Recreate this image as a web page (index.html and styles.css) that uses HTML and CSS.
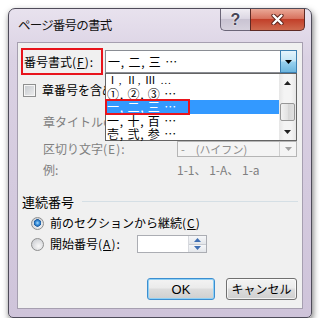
FILE: index.html
```html
<!DOCTYPE html>
<html lang="ja">
<head>
<meta charset="utf-8">
<title>ページ番号の書式</title>
<link rel="stylesheet" href="styles.css">
</head>
<body>
<div class="window">
  <div class="titlebar">
    <span class="title">ページ番号の書式</span>
    <div class="caption-btns">
      <div class="cbtn help">?</div>
      <div class="cbtn close">
        <svg width="13" height="11" viewBox="0 0 13 11"><path d="M2.5 1.5 L10.5 9.5 M10.5 1.5 L2.5 9.5" stroke="#5a2018" stroke-width="4.2" stroke-linecap="round"/><path d="M2.5 1.5 L10.5 9.5 M10.5 1.5 L2.5 9.5" stroke="#fff" stroke-width="2.4" stroke-linecap="round"/></svg>
      </div>
    </div>
  </div>
  <div class="client">
    <div class="row r1">
      <div class="label-box">番号書式<span class="mn">(<u>F</u>):</span></div>
      <div class="combo-wrap">
        <div class="combo">
          <span class="combo-text seq">一, 二, 三 …</span>
          <span class="drop-btn"><svg width="7" height="4" viewBox="0 0 7 4"><polygon points="0,0 7,0 3.5,4" fill="#000"/></svg></span>
        </div>
        <div class="listbox">
          <div class="list-items">
            <div class="item seq roman">Ⅰ, Ⅱ, Ⅲ …</div>
            <div class="item seq">①, ②, ③ …</div>
            <div class="item seq sel">一, 二, 三 …<span class="redmark"></span></div>
            <div class="item seq">一, 十, 百 …</div>
            <div class="item seq">壱, 弐, 参 …</div>
          </div>
          <div class="sb">
            <div class="sb-btn"><svg width="7" height="4" viewBox="0 0 7 4"><polygon points="0,4 7,4 3.5,0" fill="#222"/></svg></div>
            <div class="sb-track"><div class="sb-thumb"></div></div>
            <div class="sb-btn"><svg width="7" height="4" viewBox="0 0 7 4"><polygon points="0,0 7,0 3.5,4" fill="#222"/></svg></div>
          </div>
        </div>
      </div>
    </div>

    <div class="row r2">
      <span class="checkbox"></span>
      <span class="cb-label">章番号を含める<span class="mn">(<u>N</u>)</span></span>
    </div>

    <div class="row r3">
      <span class="col-label dis">章タイトルのスタイル(P):</span>
      <div class="dcombo"><span class="dtext">見出し 1</span><span class="darrow"></span></div>
    </div>
    <div class="row r4">
      <span class="col-label dis">区切り文字<span class="mn">(E):</span></span>
      <div class="dcombo"><span class="dtext">-　(ハイフン)</span><span class="darrow"><svg width="7" height="4" viewBox="0 0 7 4"><polygon points="0,0 7,0 3.5,4" fill="#a0a0a0"/></svg></span></div>
    </div>
    <div class="row r5">
      <span class="col-label dis">例:</span>
      <span class="dis example">1-1、 1-A、 1-a</span>
    </div>

    <div class="row group">
      <span class="group-text">連続番号</span>
      <span class="group-line"></span>
    </div>

    <div class="row r7">
      <span class="radio checked"></span>
      <span class="radio-label">前のセクションから継続<span class="mn">(<u>C</u>)</span></span>
    </div>
    <div class="row r8">
      <span class="radio"></span>
      <span class="radio-label fixed">開始番号<span class="mn">(<u>A</u>):</span></span>
      <div class="spin">
        <div class="spin-edit"></div>
        <div class="spin-btns">
          <span class="sp"><svg width="7" height="4" viewBox="0 0 7 4"><polygon points="0,4 7,4 3.5,0" fill="#3f6fb3"/></svg></span>
          <span class="sp"><svg width="7" height="4" viewBox="0 0 7 4"><polygon points="0,0 7,0 3.5,4" fill="#3f6fb3"/></svg></span>
        </div>
      </div>
    </div>

    <div class="row buttons">
      <div class="btn default">OK</div>
      <div class="btn">キャンセル</div>
    </div>
  </div>
</div>
</body>
</html>
```

FILE: styles.css
```css
* { box-sizing: border-box; }
html, body { margin: 0; padding: 0; background: #fff; }
body {
  font-family: "Noto Sans CJK JP", "Noto Sans", sans-serif;
  font-size: 12px;
  color: #000;
  line-height: 1;
}

.window {
  margin: 8px 0 0 8px;
  width: 304px;
  height: 310px;
  border: 1px solid #4f4c5a;
  border-radius: 7px 7px 5px 5px;
  background: linear-gradient(#e8e2ee, #dad1e3 50px, #cfc4da);
  box-shadow: 1px 3px 6px rgba(0,0,0,.55);
  padding: 0 8px 8px 8px;
  display: flex;
  flex-direction: column;
}

.titlebar {
  height: 33px;
  display: flex;
  align-items: flex-start;
}
.title {
  margin-top: 8px;
  margin-left: 1px;
  font-size: 12.5px;
  line-height: 16px;
  letter-spacing: -0.8px;
  color: #111;
}
.caption-btns {
  margin-left: auto;
  margin-right: -2px;
  display: flex;
}
.cbtn {
  height: 22px;
  border: 1px solid #6b6678;
  border-top: none;
  display: flex;
  align-items: center;
  justify-content: center;
}
.help {
  width: 30px;
  border-radius: 0 0 0 5px;
  border-right: none;
  background: linear-gradient(#f0edf3, #dcd7e3 45%, #c9c3d2 50%, #d6d1dd);
  font-family: "Liberation Sans", sans-serif;
  font-weight: bold;
  font-size: 16px;
  color: #474556;
  text-shadow: 0 0 2px #fff, 0 0 1px #fff;
}
.close {
  width: 55px;
  border-radius: 0 0 5px 0;
  border-color: #5e2a24;
  background: linear-gradient(#eaa897, #d8735f 45%, #c2402a 50%, #cf6a4f);
}

.client {
  flex: 1;
  background: #f0f0f0;
  border: 1px solid #a69fb0;
  display: flex;
  flex-direction: column;
}

.row {
  display: flex;
  align-items: center;
  height: 20px;
  flex: none;
}

.mn { letter-spacing: 1px; }

/* row 1 */
.r1 { margin-top: 5px; height: 27px; }
.label-box {
  margin-left: 3px;
  width: 82px;
  height: 27px;
  border: 2px solid #e8141c;
  padding-left: 1px;
  display: flex;
  align-items: center;
  white-space: nowrap;
}
.combo-wrap {
  margin-left: 2px;
  width: 192px;
  height: 23px;
  position: relative;
}
.combo {
  height: 23px;
  border: 1px solid #8a8d94;
  border-right: none;
  background: #fff;
  display: flex;
  align-items: center;
}
.combo-text { flex: 1; padding-left: 2px; white-space: nowrap; }
.seq { letter-spacing: 0.8px; }
.drop-btn {
  width: 17px;
  height: 23px;
  margin-top: -1px;
  margin-bottom: -1px;
  border: 1px solid #3c7fb1;
  background: linear-gradient(#e5f4fc, #c4e5f6 48%, #98d1ef 52%, #6db6de);
  display: flex;
  align-items: center;
  justify-content: center;
}

.listbox {
  position: absolute;
  left: 0;
  top: 23px;
  width: 192px;
  height: 68px;
  border: 1px solid #646464;
  background: #fff;
  display: flex;
  z-index: 5;
}
.list-items { flex: 1; }
.item {
  height: 13px;
  line-height: 13px;
  padding-left: 1px;
  white-space: nowrap;
}
.item.roman { font-family: "Liberation Serif", "Noto Sans CJK JP", serif; font-size: 11px; }
.item.sel {
  height: 14px;
  line-height: 14px;
  background: #3399ff;
  color: #fff;
  position: relative;
}
.redmark {
  position: absolute;
  left: -1px;
  top: -1px;
  width: 85px;
  height: 16px;
  border: 2px solid #e8141c;
}
.sb {
  width: 17px;
  display: flex;
  flex-direction: column;
  background: linear-gradient(90deg, #e6e6e6, #f4f4f4 30%, #f4f4f4 70%, #e6e6e6);
}
.sb-btn {
  height: 17px;
  display: flex;
  align-items: center;
  justify-content: center;
}
.sb-track { flex: 1; padding: 12px 1px 0 1px; }
.sb-thumb {
  height: 18px;
  border: 1px solid #979797;
  border-radius: 2px;
  background: linear-gradient(90deg, #f2f2f2, #e2e2e2 50%, #d6d6d6 51%, #e0e0e0);
}

/* row 2 */
.r2 { margin-top: 5px; }
.checkbox {
  margin-left: 5px;
  width: 13px;
  height: 13px;
  border: 1px solid #8e8f8f;
  background: linear-gradient(135deg, #c4c8cd, #eeeeee);
  box-shadow: inset 0 0 0 1px #f6f6f6;
}
.cb-label { margin-left: 6px; white-space: nowrap; }

/* rows 3-5 */
.r3 { margin-top: 12px; }
.r4 { margin-top: 8px; height: 18px; }
.r5 { margin-top: 2px; }
.col-label {
  margin-left: 25px;
  width: 134px;
  flex: none;
  white-space: nowrap;
}
.dis { color: #7f7f7f; }
.dcombo {
  width: 120px;
  height: 16px;
  border: 1px solid #b5b5b5;
  background: #f4f4f4;
  display: flex;
  align-items: center;
  flex: none;
}
.dtext { flex: 1; padding-left: 3px; color: #8d8d8d; font-size: 11px; white-space: nowrap; }
.darrow {
  width: 17px;
  height: 14px;
  border-left: 1px solid #cfcfcf;
  display: flex;
  align-items: center;
  justify-content: center;
}
.example { white-space: nowrap; }

/* group */
.group { margin-top: 11px; }
.group-text { margin-left: 4px; font-size: 13px; }
.group-line {
  flex: 1;
  margin-left: 8px;
  margin-right: 4px;
  height: 1px;
  background: #d5dfe5;
}

/* radios */
.r7 { margin-top: 2px; }
.r8 { margin-top: 1px; }
.radio {
  margin-left: 13px;
  width: 13px;
  height: 13px;
  border-radius: 50%;
  border: 1px solid #8e8f8f;
  background: radial-gradient(circle at 60% 65%, #f8f8f8, #d2d4d8 70%);
  flex: none;
}
.radio.checked {
  background:
    radial-gradient(circle at 50% 45%, #a8dcfb 0, #3a8fdc 2px, #1b5b9e 3.5px, transparent 4px),
    radial-gradient(circle at 60% 65%, #f8f8f8, #d2d4d8 70%);
}
.radio-label { margin-left: 6px; white-space: nowrap; }
.radio-label.fixed { width: 87px; flex: none; }
.spin {
  width: 70px;
  height: 18px;
  border: 1px solid #abadb3;
  background: #fff;
  display: flex;
}
.spin-edit { flex: 1; }
.spin-btns {
  width: 18px;
  display: flex;
  flex-direction: column;
  border-left: 1px solid #d7d9de;
}
.sp {
  flex: 1;
  display: flex;
  align-items: center;
  justify-content: center;
  background: linear-gradient(#f6f7f9, #e3e6ea);
}
.sp + .sp { border-top: 1px solid #c9ccd2; }

/* buttons */
.buttons {
  margin-top: 24px;
  height: 22px;
  justify-content: flex-end;
  padding-right: 5px;
  gap: 11px;
}
.btn {
  height: 22px;
  width: 71px;
  border: 1px solid #707070;
  border-radius: 3px;
  background: linear-gradient(#f3f3f3, #ebebeb 45%, #dddddd 50%, #cfcfcf);
  box-shadow: inset 0 0 0 1px rgba(255,255,255,.7);
  display: flex;
  align-items: center;
  justify-content: center;
  white-space: nowrap;
}
.btn.default {
  width: 68px;
  border-color: #3c8ed0;
  box-shadow: inset 0 0 0 1px #8fd0f5;
  font-family: "Liberation Sans", "Noto Sans CJK JP", sans-serif;
  font-size: 13px;
}
```
